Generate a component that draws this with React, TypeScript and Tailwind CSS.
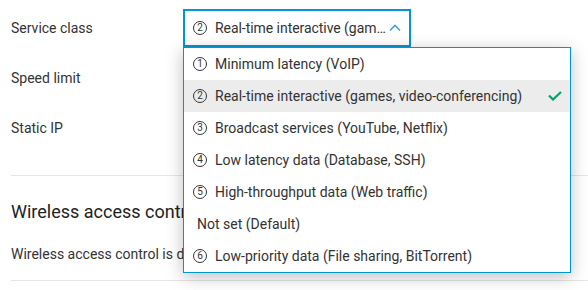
import { useState } from 'react'

const options = [
  { key: 'voip', num: '1', label: 'Minimum latency (VoIP)' },
  { key: 'rt', num: '2', label: 'Real-time interactive (games, video-conferencing)' },
  { key: 'bc', num: '3', label: 'Broadcast services (YouTube, Netflix)' },
  { key: 'll', num: '4', label: 'Low latency data (Database, SSH)' },
  { key: 'ht', num: '5', label: 'High-throughput data (Web traffic)' },
  { key: 'def', num: '', label: 'Not set (Default)' },
  { key: 'lp', num: '6', label: 'Low-priority data (File sharing, BitTorrent)' },
]

function Circled({ n }: { n: string }) {
  return (
    <span className="inline-flex w-[14px] h-[14px] mr-[8px] rounded-full border border-[#333] items-center justify-center text-[10px] leading-none align-[2px]">
      {n}
    </span>
  )
}

function ChevronUp() {
  return (
    <svg width="12" height="8" viewBox="0 0 12 8" className="shrink-0">
      <path d="M1 6.5 L6 1.5 L11 6.5" fill="none" stroke="#4a9fd8" strokeWidth="1.6" />
    </svg>
  )
}

function Check() {
  return (
    <svg width="14" height="10" viewBox="0 0 14 10" className="shrink-0">
      <path d="M1 4.5 L5 8.5 L13 1" fill="none" stroke="#00a36c" strokeWidth="2.2" />
    </svg>
  )
}

export default function App() {
  const [selected, setSelected] = useState('rt')
  const current = options.find(o => o.key === selected)

  return (
    <div className="w-[588px] h-[290px] overflow-hidden bg-white text-[#333] font-['Roboto','DejaVu_Sans',sans-serif] text-[14px]">
      <div className="pl-[11px] pt-[3px]">
        <div className="h-[50px] flex items-center relative">
          <div className="w-[172px]">Service class</div>
          <button className="w-[228px] h-[38px] border-2 border-[#0096d6] flex items-center pl-[8px] pr-[8px] gap-[1px] text-left">
            <span className="truncate flex-1 tracking-[-0.05px]">
              {current?.num && <Circled n={current.num} />}
              {current?.label}
            </span>
            <ChevronUp />
          </button>
          <div className="absolute left-[172px] top-[44px] w-[388px] bg-white border border-[#0096d6] shadow-[0_4px_16px_rgba(0,0,0,0.25)] z-10">
            {options.map(o => (
              <div
                key={o.key}
                onClick={() => setSelected(o.key)}
                className={`h-[32px] flex items-center pl-[9px] pr-[8px] cursor-pointer ${o.key === selected ? 'bg-[#ececed]' : ''}`}
              >
                <span className={`flex-1 whitespace-nowrap ${o.key === 'def' ? 'pl-[4px]' : ''}`}>
                  {o.num && <Circled n={o.num} />}
                  {o.label}
                </span>
                {o.key === selected && <Check />}
              </div>
            ))}
          </div>
        </div>
        <div className="h-[50px] flex items-center">Speed limit</div>
        <div className="h-[50px] flex items-center">Static IP</div>
        <div className="mt-[22px] border-t border-[#e6e6e6]" />
        <div className="mt-[24px] text-[18px] text-[#222] leading-[24px]">Wireless access control</div>
        <div className="mt-[20px] leading-[20px]">Wireless access control is disabled</div>
        <div className="mt-[16px] border-t border-[#e6e6e6]" />
      </div>
    </div>
  )
}
